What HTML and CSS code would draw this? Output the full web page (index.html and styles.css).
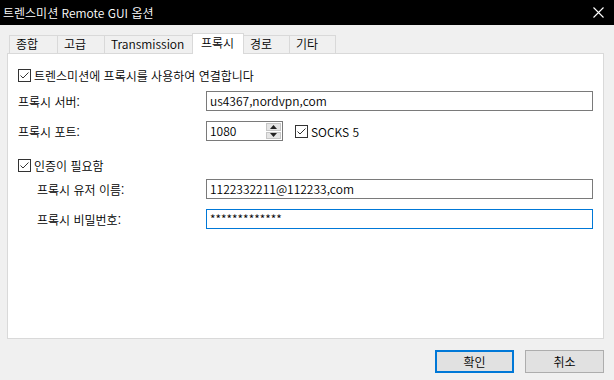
FILE: index.html
```html
<!DOCTYPE html>
<html lang="ko">
<head>
<meta charset="utf-8">
<link rel="stylesheet" href="styles.css">
</head>
<body>
<div class="window">
  <div class="titlebar">
    <span class="title">트렌스미션 Remote GUI 옵션</span>
    <svg class="close" width="11" height="11" viewBox="0 0 11 11"><path d="M0.5 0.5L10.5 10.5M10.5 0.5L0.5 10.5" stroke="#fff" stroke-width="1.1"/></svg>
  </div>
  <div class="tabs">
    <div class="tab t1">종합</div>
    <div class="tab t2">고급</div>
    <div class="tab t3">Transmission</div>
    <div class="tab active t4">프록시</div>
    <div class="tab t5">경로</div>
    <div class="tab t6">기타</div>
  </div>
  <div class="panel">
    <div class="check-row first">
      <span class="cb"><svg width="13" height="13" viewBox="0 0 13 13"><rect x="0.5" y="0.5" width="12" height="12" fill="#fff" stroke="#333"/><path d="M2.5 6.5L5 9L10.5 3.5" fill="none" stroke="#333" stroke-width="1"/></svg></span>
      <span>트렌스미션에 프록시를 사용하여 연결합니다</span>
    </div>
    <div class="row server">
      <label class="lbl">프록시 서버:</label>
      <div class="input wide">us4367,nordvpn,com</div>
    </div>
    <div class="row port">
      <label class="lbl">프록시 포트:</label>
      <div class="spinner">
        <div class="spin-val">1080</div>
        <div class="spin-btns">
          <div class="sb"><svg width="7" height="4" viewBox="0 0 7 4"><path d="M3.5 0L7 4H0Z" fill="#222"/></svg></div>
          <div class="sb"><svg width="7" height="4" viewBox="0 0 7 4"><path d="M0 0H7L3.5 4Z" fill="#222"/></svg></div>
        </div>
      </div>
      <div class="check-inline">
        <span class="cb"><svg width="13" height="13" viewBox="0 0 13 13"><rect x="0.5" y="0.5" width="12" height="12" fill="#fff" stroke="#333"/><path d="M2.5 6.5L5 9L10.5 3.5" fill="none" stroke="#333" stroke-width="1"/></svg></span>
        <span class="socks">SOCKS 5</span>
      </div>
    </div>
    <div class="check-row auth">
      <span class="cb"><svg width="13" height="13" viewBox="0 0 13 13"><rect x="0.5" y="0.5" width="12" height="12" fill="#fff" stroke="#333"/><path d="M2.5 6.5L5 9L10.5 3.5" fill="none" stroke="#333" stroke-width="1"/></svg></span>
      <span>인증이 필요함</span>
    </div>
    <div class="row user">
      <label class="lbl sub">프록시 유저 이름:</label>
      <div class="input wide">1122332211@112233,com</div>
    </div>
    <div class="row pass">
      <label class="lbl sub">프록시 비밀번호:</label>
      <div class="input wide focus">*************</div>
    </div>
  </div>
  <div class="buttons">
    <div class="btn default">확인</div>
    <div class="btn">취소</div>
  </div>
</div>
</body>
</html>
```
FILE: styles.css
```css
* { box-sizing: border-box; }
html, body { margin: 0; padding: 0; }
body {
  width: 614px;
  height: 380px;
  background: #f0f0f0;
  font-family: "Noto Sans CJK KR", "Noto Sans", sans-serif;
  font-weight: 350;
  font-size: 12px;
  color: #000;
  overflow: hidden;
}
.window { display: flex; flex-direction: column; height: 380px; }
.titlebar {
  height: 25px;
  background: #000;
  color: #fff;
  display: flex;
  align-items: center;
  justify-content: space-between;
  padding: 0 10px 0 3px;
  flex: none;
}
.title { font-size: 12px; line-height: 14px; }
.close { display: block; }
.tabs {
  display: flex;
  align-items: flex-end;
  height: 28px;
  padding-left: 9px;
  flex: none;
  position: relative;
  z-index: 1;
}
.tab {
  height: 18px;
  border: 1px solid #d9d9d9;
  border-bottom: none;
  margin-right: -1px;
  background: #f0f0f0;
  line-height: 16px;
  padding-left: 6px;
  font-size: 12px;
}
.t1 { width: 49px; }
.t2 { width: 48px; }
.t3 { width: 90px; }
.t4 { width: 52px; }
.t5 { width: 47px; }
.t6 { width: 47px; }
.tab.active {
  height: 21px;
  background: #fff;
  margin-bottom: -1px;
  margin-left: -1px;
  padding-left: 8px;
  line-height: 18px;
  position: relative;
}
.panel {
  margin: 0 10px 0 7px;
  height: 286px;
  background: #fff;
  border: 1px solid #d9d9d9;
  padding: 14px 9px 0 10px;
  flex: none;
}
.check-row { display: flex; align-items: center; height: 14px; gap: 3px; }
.cb { display: block; width: 13px; height: 13px; }
.cb svg { display: block; }
.row { display: flex; align-items: center; height: 20px; }
.row.server { margin-top: 9px; }
.row.port { margin-top: 10px; }
.check-row.auth { margin-top: 17px; }
.row.user { margin-top: 7px; }
.row.pass { margin-top: 10px; }
.lbl { width: 188px; flex: none; }
.lbl.sub { padding-left: 19px; }
.input {
  height: 20px;
  border: 1px solid #7a7a7a;
  padding-left: 3px;
  line-height: 17px;
  background: #fff;
}
.input.wide { width: 387px; }
.input.focus { border-color: #0078d7; }
.spinner {
  width: 77px;
  height: 20px;
  border: 1px solid #7a7a7a;
  display: flex;
}
.spin-val { flex: 1; padding-left: 3px; line-height: 17px; }
.spin-btns { width: 16px; display: flex; flex-direction: column; gap: 1px; padding: 1px 1px 1px 0; }
.sb {
  flex: 1;
  background: #e5e5e5;
  border: 1px solid #c6c6c6;
  display: flex;
  align-items: center;
  justify-content: center;
}
.sb svg { display: block; }
.check-inline { display: flex; align-items: center; gap: 3px; margin-left: 12px; }
.socks { font-size: 12px; }
.buttons {
  display: flex;
  justify-content: flex-end;
  gap: 11px;
  padding: 11px 10px 0 0;
  flex: none;
}
.btn {
  width: 79px;
  height: 23px;
  background: #e1e1e1;
  border: 1px solid #adadad;
  display: flex;
  align-items: center;
  justify-content: center;
  font-size: 12px;
}
.btn.default { border: 2px solid #0078d7; }
```
